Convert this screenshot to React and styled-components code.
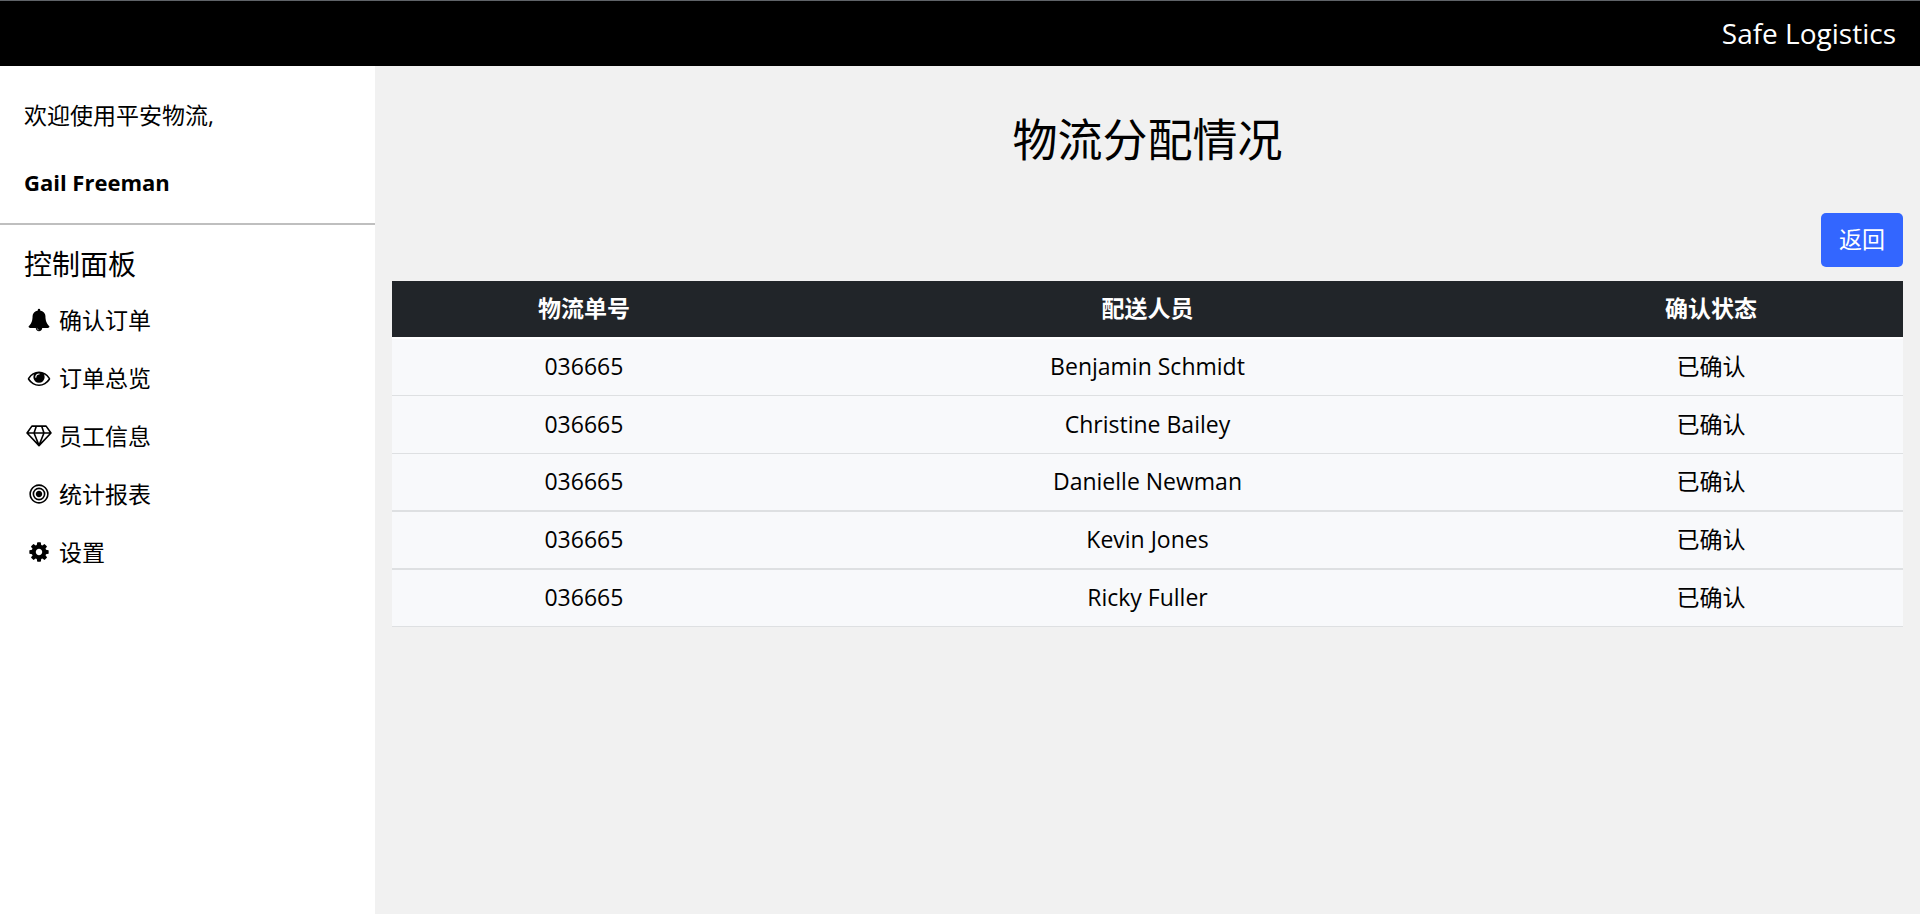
import React from "react";
import styled, { createGlobalStyle } from "styled-components";

const GlobalStyle = createGlobalStyle`
  *, *::before, *::after { box-sizing: border-box; }
  body {
    margin: 0;
    background: #f1f1f1;
    color: #000;
    font-family: "Open Sans", "Noto Sans CJK SC", sans-serif;
    font-size: 23px;
    line-height: 34px;
  }
`;

const Page = styled.div`
  display: flex;
  flex-direction: column;
  min-height: 100vh;
`;

const TopBar = styled.header`
  display: flex;
  justify-content: flex-end;
  align-items: center;
  height: 66px;
  padding: 0 24px 2px;
  border-top: 1px solid #5f6368;
  background: #000;
  color: #fff;
  font-size: 28px;
`;

const Body = styled.div`
  display: flex;
  flex: 1;
`;

const Sidebar = styled.aside`
  flex: 0 0 375px;
  background: #fff;
`;

const Greeting = styled.div`
  display: flex;
  flex-direction: column;
  gap: 33px;
  padding: 32px 24px 24px;
  border-bottom: 2px solid #bfbfbf;

  strong { font-size: 22px; }
`;

const PanelTitle = styled.h2`
  margin: 0;
  padding: 18px 24px 6px;
  font-size: 28px;
  font-weight: 400;
  line-height: 42px;
`;

const NavLink = styled.a`
  display: flex;
  align-items: center;
  gap: 5px;
  height: 58px;
  padding: 0 24px;
  color: inherit;
  text-decoration: none;
`;

const NavIcon = styled.svg`
  width: 30px;
  height: 24px;
  fill: currentColor;
`;

const Main = styled.main`
  flex: 1;
  display: flex;
  flex-direction: column;
  padding: 42px 17px;
`;

const PageTitle = styled.h1`
  margin: 0 0 41px;
  font-size: 45px;
  font-weight: 400;
  line-height: 64px;
  text-align: center;
`;

const BackButton = styled.button`
  align-self: flex-end;
  height: 54px;
  margin-bottom: 14px;
  padding: 0 18px 2px;
  border: 0;
  border-radius: 5px;
  background: #3366ff;
  color: #fff;
  font: inherit;
`;

const Table = styled.table`
  width: 100%;
  border-collapse: separate;
  border-spacing: 0;
  table-layout: fixed;
  text-align: center;
`;

const HeadCell = styled.th`
  width: ${(p) => p.$width};
  height: 57px;
  padding: 0 0 2px;
  border-bottom: 1px solid #fff;
  background: #212529;
  color: #fff;
  font-weight: 700;
`;

const Row = styled.tr`
  td {
    height: 58px;
    padding: 0 0 2px;
    border-bottom: ${(p) => p.$line}px solid #dee0e2;
    background: #f8f9fb;
  }
  &:first-child td { border-top: 1px solid #fff; }
  &:last-child td { height: 57px; }
`;

const ICONS = {
  bell: "M912 1696q0-16-16-16-59 0-101.500-42.500t-42.500-101.500q0-16-16-16t-16 16q0 73 51.500 124.500t124.500 51.500q16 0 16-16zm816-288q0 52-38 90t-90 38h-448q0 106-75 181t-181 75-181-75-75-181h-448q-52 0-90-38t-38-90q50-42 91-88t85-119.500 74.500-158.500 50-206 19.500-260q0-152 117-282.500t307-158.500q-8-19-8-39 0-40 28-68t68-28 68 28 28 68q0 20-8 39 190 28 307 158.500t117 282.500q0 139 19.500 260t50 206 74.500 158.500 85 119.500 91 88z",
  eye: "M1664 960q-152-236-381-353 61 104 61 225 0 185-131.500 316.500t-316.500 131.500-316.500-131.500-131.500-316.500q0-121 61-225-229 117-381 353 133 205 333.500 326.500t434.500 121.500 434.500-121.500 333.500-326.500zm-720-384q0-20-14-34t-34-14q-125 0-214.500 89.500t-89.500 214.500q0 20 14 34t34 14 34-14 14-34q0-86 61-147t147-61q20 0 34-14t14-34zm848 384q0 34-20 69-140 230-376.500 368.500t-499.500 138.500-499.500-139-376.500-368q-20-35-20-69t20-69q140-229 376.500-368t499.500-139 499.500 139 376.500 368q20 35 20 69z",
  bullseye: "M1152 896q0 106-75 181t-181 75-181-75-75-181 75-181 181-75 181 75 75 181zm128 0q0-159-112.500-271.500t-271.500-112.500-271.500 112.500-112.500 271.500 112.500 271.500 271.500 112.500 271.500-112.500 112.500-271.500zm128 0q0 212-150 362t-362 150-362-150-150-362 150-362 362-150 362 150 150 362zm128 0q0-130-51-248.500t-136.500-204-204-136.500-248.500-51-248.500 51-204 136.500-136.500 204-51 248.500 51 248.500 136.500 204 204 136.500 248.500 51 248.500-51 204-136.500 136.500-204 51-248.500zm128 0q0 209-103 385.500t-279.500 279.500-385.500 103-385.500-103-279.500-279.500-103-385.500 103-385.500 279.500-279.500 385.500-103 385.500 103 279.500 279.500 103 385.500z",
  cog: "M1152 896q0-106-75-181t-181-75-181 75-75 181 75 181 181 75 181-75 75-181zm512-109v222q0 12-8 23t-20 13l-185 28q-19 54-39 91 35 50 107 138 10 12 10 25t-9 23q-27 37-99 108t-94 71q-12 0-26-9l-138-108q-44 23-91 38-16 136-29 186-7 28-36 28h-222q-14 0-24.500-8.500t-11.500-21.500l-28-184q-49-16-90-37l-141 107q-10 9-25 9-14 0-25-11-126-114-165-168-7-10-7-23 0-12 8-23 15-21 51-66.500t54-70.500q-27-50-41-99l-183-27q-13-2-21-12.500t-8-23.500v-222q0-12 8-23t19-13l186-28q14-46 39-92-40-57-107-138-10-12-10-24 0-10 9-23 26-36 98.500-107.500t94.500-71.500q13 0 26 10l138 107q44-23 91-38 16-136 29-186 7-28 36-28h222q14 0 24.500 8.500t11.500 21.500l28 184q49 16 90 37l142-107q9-9 24-9 13 0 25 10 129 119 165 170 7 8 7 22 0 12-8 23-15 21-51 66.500t-54 70.500q26 50 41 98l183 28q13 2 21 12.500t8 23.500z",
};

function Icon({ name }) {
  return (
    <NavIcon viewBox="-299 -60 2390 1912" aria-hidden="true">
      {name === "diamond" ? (
        <path
          d="M330 110H1462L1850 660L896 1660L-58 660ZM-58 660H1850M680 110L500 660L896 1640L1292 660L1112 110"
          fill="none"
          stroke="currentColor"
          strokeWidth="128"
          strokeLinejoin="round"
        />
      ) : (
        <path d={ICONS[name]} />
      )}
    </NavIcon>
  );
}

const NAV = [
  ["bell", "确认订单"],
  ["eye", "订单总览"],
  ["diamond", "员工信息"],
  ["bullseye", "统计报表"],
  ["cog", "设置"],
];

const ROWS = [
  { id: "036665", name: "Benjamin Schmidt", status: "已确认", line: 1 },
  { id: "036665", name: "Christine Bailey", status: "已确认", line: 1 },
  { id: "036665", name: "Danielle Newman", status: "已确认", line: 2 },
  { id: "036665", name: "Kevin Jones", status: "已确认", line: 2 },
  { id: "036665", name: "Ricky Fuller", status: "已确认", line: 1 },
];

export default function App() {
  return (
    <Page lang="zh-CN">
      <GlobalStyle />
      <TopBar>Safe Logistics</TopBar>
      <Body>
        <Sidebar>
          <Greeting>
            <span>欢迎使用平安物流,</span>
            <strong>Gail Freeman</strong>
          </Greeting>
          <PanelTitle>控制面板</PanelTitle>
          <nav>
            {NAV.map(([icon, label]) => (
              <NavLink href="#" key={label}>
                <Icon name={icon} />
                {label}
              </NavLink>
            ))}
          </nav>
        </Sidebar>
        <Main>
          <PageTitle>物流分配情况</PageTitle>
          <BackButton type="button">返回</BackButton>
          <Table>
            <thead>
              <tr>
                <HeadCell $width="25.4%">物流单号</HeadCell>
                <HeadCell $width="49.2%">配送人员</HeadCell>
                <HeadCell $width="25.4%">确认状态</HeadCell>
              </tr>
            </thead>
            <tbody>
              {ROWS.map((row) => (
                <Row key={row.name} $line={row.line}>
                  <td>{row.id}</td>
                  <td>{row.name}</td>
                  <td>{row.status}</td>
                </Row>
              ))}
            </tbody>
          </Table>
        </Main>
      </Body>
    </Page>
  );
}
